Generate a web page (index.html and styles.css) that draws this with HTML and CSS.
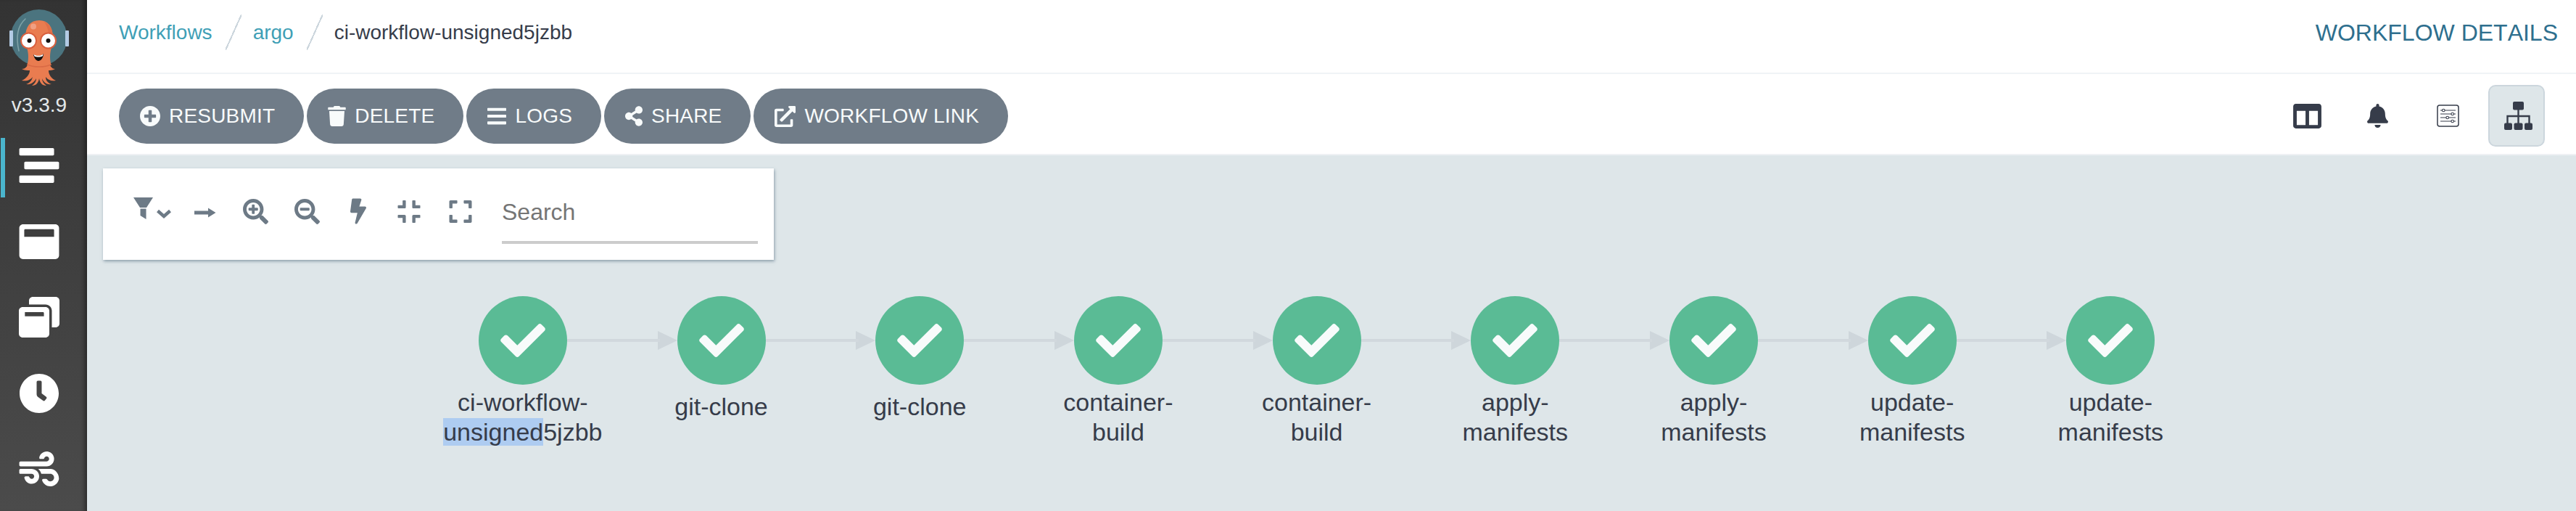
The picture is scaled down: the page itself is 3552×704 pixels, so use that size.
FILE: index.html
```html
<!DOCTYPE html>
<html lang="en">
<head>
<meta charset="utf-8">
<title>ci-workflow-unsigned5jzbb</title>
<link rel="stylesheet" href="styles.css">
</head>
<body>
<div class="app">
  <aside class="sidebar">
    <svg class="logo" viewBox="0 0 120 128" aria-hidden="true">
      <circle cx="53.6" cy="52" r="39" fill="#4b747f"/>
      <path d="M35 26C26 34 21 48 26 70" fill="none" stroke="#7fa3a8" stroke-width="1.6" stroke-linecap="round"/>
      <rect x="13" y="42" width="5" height="22" rx="1" fill="#b3cbe4"/>
      <rect x="90" y="42" width="5" height="22" rx="1" fill="#b3cbe4"/>
      <path d="M30 95C36 95 39 90 39 84H68C68 90 71 95 76 95C72 97 69 97 67 97C67 102 70 108 77 111C70 112 66 110 63 106C63 110 65 114 71 116C64 117 60 113 58 108C58 112 60 115 64 118C58 118 55 114 54 108C53 114 50 118 44 118C48 115 50 112 50 108C47 113 43 117 36 116C42 114 44 110 45 106C42 110 38 112 30 111C37 108 41 102 41 97C38 97 34 97 30 95Z" fill="#e97c50"/>
      <path d="M35 52C35 36 42 28 54 28S73 36 73 52C73 62 69 68 69 78C69 84 70 88 71 90H37C38 88 39 84 39 78C39 68 35 62 35 52Z" fill="#e97c50"/>
      <path d="M60 29C68 33 73 40 73 52L68 58C68 46 66 36 60 29Z" fill="#df6f48"/>
      <path d="M38 89C46 93 62 93 70 89" fill="none" stroke="#d96a45" stroke-width="1.400"/>
      <circle cx="46" cy="36.500" r="4" fill="#f0a083"/>
      <circle cx="39.500" cy="56" r="10.500" fill="#fff" stroke="#d9603e" stroke-width="2"/>
      <circle cx="66.500" cy="56" r="10.500" fill="#fff" stroke="#d9603e" stroke-width="2"/>
      <circle cx="40.500" cy="56" r="3" fill="#111"/>
      <circle cx="66.500" cy="56" r="3" fill="#111"/>
      <path d="M46 75C50 78 56 78 60 74C60 80 56 84 53 84C50 84 47 80 46 75Z" fill="#111"/>
      <path d="M46.500 75C50 77.500 56 77.500 59.500 74.500L59 77C56 79 50 79 47.500 77.500Z" fill="#fff"/>
    </svg>
    <div class="version">v3.3.9</div>
    <nav class="nav">
      <a class="nav-item active"><svg class="nav-icon" viewBox="0 0 512 448"><path d="M16 96h416c8.840 0 16-7.160 16-16V16c0-8.840-7.160-16-16-16H16C7.160 0 0 7.160 0 16v64c0 8.840 7.160 16 16 16zm480 80H80c-8.840 0-16 7.160-16 16v64c0 8.840 7.160 16 16 16h416c8.840 0 16-7.160 16-16v-64c0-8.840-7.160-16-16-16zm-64 176H16c-8.840 0-16 7.160-16 16v64c0 8.840 7.160 16 16 16h416c8.840 0 16-7.160 16-16v-64c0-8.840-7.160-16-16-16z"/></svg></a>
      <a class="nav-item"><svg class="nav-icon" viewBox="0 32 512 448"><path d="M464 32H48C21.500 32 0 53.500 0 80v352c0 26.500 21.500 48 48 48h416c26.500 0 48-21.500 48-48V80c0-26.500-21.500-48-48-48zm-16 160H64v-84c0-6.600 5.400-12 12-12h360c6.600 0 12 5.400 12 12v84z"/></svg></a>
      <a class="nav-item"><svg class="nav-icon" viewBox="0 0 512 512"><path d="M512 48v288c0 26.500-21.500 48-48 48h-48V176c0-44.100-35.900-80-80-80H128V48c0-26.500 21.500-48 48-48h288c26.500 0 48 21.500 48 48zM384 176v288c0 26.500-21.500 48-48 48H48c-26.500 0-48-21.500-48-48V176c0-26.500 21.500-48 48-48h288c26.500 0 48 21.500 48 48zm-68 28c0-6.600-5.400-12-12-12H76v52h240v-40z"/></svg></a>
      <a class="nav-item"><svg class="nav-icon" viewBox="8 8 496 496"><path d="M256,8C119,8,8,119,8,256S119,504,256,504,504,393,504,256,393,8,256,8Zm92.490,313h0l-20,25a16,16,0,0,1-22.490,2.500h0l-67-49.720a40,40,0,0,1-15-31.230V112a16,16,0,0,1,16-16h32a16,16,0,0,1,16,16V256l58,42.500A16,16,0,0,1,348.490,321Z"/></svg></a>
      <a class="nav-item"><svg class="nav-icon" viewBox="0 32 512 448"><path d="M156.700 256H16c-8.800 0-16 7.200-16 16v32c0 8.800 7.200 16 16 16h142.200c15.900 0 30.800 10.900 33.400 26.600 3.300 20-12.100 37.400-31.600 37.400-14.100 0-26.100-9.200-30.400-21.900-2.100-6.300-8.600-10.100-15.200-10.100H81.600c-9.800 0-17.700 8.800-15.900 18.400 8.600 44.100 47.600 77.600 94.200 77.600 57.100 0 102.700-50.100 95.200-108.600C249 291 205.400 256 156.700 256zM16 224h336c59.700 0 106.800-54.800 93.800-116.700-7.600-36.200-36.900-65.500-73.100-73.100-55.400-11.600-105.100 24.900-114.900 75.500-1.900 9.600 6.100 18.300 15.800 18.300h32.800c6.700 0 13.100-3.800 15.200-10.100C325.900 105.200 337.900 96 352 96c19.400 0 34.900 17.400 31.600 37.400-2.600 15.700-17.400 26.600-33.400 26.600H16c-8.800 0-16 7.200-16 16v32c0 8.800 7.200 16 16 16zm384 32H243.700c19.300 16.600 33.200 38.800 39.800 64H400c26.500 0 48 21.500 48 48s-21.500 48-48 48c-17.900 0-33.300-9.900-41.600-24.400-2.900-5-8.700-7.600-14.500-7.600h-33.800c-10.900 0-19 10.800-15.300 21.100 17.800 50.600 70.500 84.800 129.400 72.300 41.200-8.700 75.100-41.600 84.700-82.700C520.100 326.800 465.300 256 400 256z"/></svg></a>
    </nav>
  </aside>
  <main class="main">
    <header class="topbar">
      <div class="crumbs">
        <a class="crumb-link">Workflows</a>
        <span class="crumb-sep"></span>
        <a class="crumb-link">argo</a>
        <span class="crumb-sep"></span>
        <span class="crumb-current">ci-workflow-unsigned5jzbb</span>
      </div>
      <div class="page-title">WORKFLOW DETAILS</div>
    </header>
    <div class="toolbar">
      <div class="actions">
        <button class="btn"><svg class="btn-icon i-plus" viewBox="8 8 496 496"><path d="M256 8C119 8 8 119 8 256s111 248 248 248 248-111 248-248S393 8 256 8zm144 276c0 6.600-5.400 12-12 12h-92v92c0 6.600-5.400 12-12 12h-56c-6.600 0-12-5.400-12-12v-92h-92c-6.600 0-12-5.400-12-12v-56c0-6.600 5.400-12 12-12h92v-92c0-6.600 5.400-12 12-12h56c6.600 0 12 5.400 12 12v92h92c6.600 0 12 5.400 12 12v56z"/></svg>RESUBMIT</button>
        <button class="btn"><svg class="btn-icon i-trash" viewBox="0 0 448 512"><path d="M432 32H312l-9.400-18.700A24 24 0 0 0 281.100 0H166.800a23.720 23.720 0 0 0-21.400 13.300L136 32H16A16 16 0 0 0 0 48v32a16 16 0 0 0 16 16h416a16 16 0 0 0 16-16V48a16 16 0 0 0-16-16zM53.200 467a48 48 0 0 0 47.900 45h245.800a48 48 0 0 0 47.900-45L416 128H32z"/></svg>DELETE</button>
        <button class="btn"><svg class="btn-icon i-bars" viewBox="0 60 448 392"><path d="M16 132h416c8.837 0 16-7.163 16-16V76c0-8.837-7.163-16-16-16H16C7.163 60 0 67.163 0 76v40c0 8.837 7.163 16 16 16zm0 160h416c8.837 0 16-7.163 16-16v-40c0-8.837-7.163-16-16-16H16c-8.837 0-16 7.163-16 16v40c0 8.837 7.163 16 16 16zm0 160h416c8.837 0 16-7.163 16-16v-40c0-8.837-7.163-16-16-16H16c-8.837 0-16 7.163-16 16v40c0 8.837 7.163 16 16 16z"/></svg>LOGS</button>
        <button class="btn"><svg class="btn-icon i-share" viewBox="0 0 448 512"><path d="M352 320c-22.608 0-43.387 7.819-59.790 20.895l-102.486-64.054a96.551 96.551 0 0 0 0-41.683l102.486-64.054C308.613 184.181 329.392 192 352 192c53.019 0 96-42.981 96-96S405.019 0 352 0s-96 42.981-96 96c0 7.158.790 14.130 2.276 20.841L155.790 180.895C139.387 167.819 118.608 160 96 160c-53.019 0-96 42.981-96 96s42.981 96 96 96c22.608 0 43.387-7.819 59.790-20.895l102.486 64.054A96.301 96.301 0 0 0 256 416c0 53.019 42.981 96 96 96s96-42.981 96-96-42.981-96-96-96z"/></svg>SHARE</button>
        <button class="btn"><svg class="btn-icon i-link" viewBox="0 0 512 512"><path d="M432 320h-32a16 16 0 0 0-16 16v112H64V128h144a16 16 0 0 0 16-16V80a16 16 0 0 0-16-16H48a48 48 0 0 0-48 48v352a48 48 0 0 0 48 48h352a48 48 0 0 0 48-48V336a16 16 0 0 0-16-16zM488 0H360c-21.370 0-32.050 25.910-17 41l35.730 35.730L135 320.370a24 24 0 0 0 0 34L157.670 377a24 24 0 0 0 34 0l243.610-243.680L471 169c15 15 41 4.500 41-17V24a24 24 0 0 0-24-24z"/></svg>WORKFLOW LINK</button>
      </div>
      <div class="views">
        <button class="view"><svg class="v-columns" viewBox="0 32 512 448"><path d="M464 32H48C21.490 32 0 53.490 0 80v352c0 26.510 21.490 48 48 48h416c26.510 0 48-21.490 48-48V80c0-26.510-21.490-48-48-48zM224 416H64V160h160v256zm224 0H288V160h160v256z"/></svg></button>
        <button class="view"><svg class="v-bell" viewBox="0 0 448 512"><path d="M224 512c35.320 0 63.970-28.650 63.970-64H160.030c0 35.350 28.650 64 63.970 64zm215.390-149.710c-19.320-20.760-55.470-51.990-55.470-154.290 0-77.700-54.480-139.900-127.940-155.160V32c0-17.670-14.320-32-31.980-32s-31.980 14.330-31.980 32v20.840C118.560 68.100 64.080 130.300 64.080 208c0 102.300-36.150 133.530-55.470 154.290-6 6.450-8.660 14.160-8.610 21.710.110 16.400 12.980 32 32.100 32h383.800c19.120 0 32-15.600 32.100-32 .050-7.550-2.610-15.270-8.610-21.710z"/></svg></button>
        <button class="view"><svg class="v-sliders" viewBox="0 0 31 31"><rect x="1" y="1" width="29" height="29" rx="3" fill="none" stroke="#363c4a" stroke-width="1.500"/><path d="M5 8h21M5 13h21M5 18h21M5 23h21" stroke="#363c4a" stroke-width="1.200"/><g fill="#fff" stroke="#363c4a" stroke-width="1.100"><circle cx="9.300" cy="8" r="1.800"/><circle cx="21.700" cy="13" r="1.800"/><circle cx="14.700" cy="18" r="1.800"/><circle cx="21.700" cy="23" r="1.800"/></g></svg></button>
        <button class="view selected"><svg class="v-sitemap" viewBox="0 0 39 39"><path d="M19.500 11V20M4.500 30V20H34.500V30M19.500 20V30" fill="none" stroke="#363c4a" stroke-width="2.400"/><rect x="12" y="0" width="15" height="11.500" rx="2"/><rect x="0" y="29.500" width="11" height="9.500" rx="2"/><rect x="13.500" y="29.500" width="12" height="9.500" rx="2"/><rect x="28" y="29.500" width="11" height="9.500" rx="2"/></svg></button>
      </div>
    </div>
    <section class="canvas">
      <div class="filters">
        <div class="tool tool-filter">
          <svg class="t-funnel" viewBox="0 0 27 30"><path d="M0 0H27L18 14H9ZM9.500 15.500H17.500V30L9.500 25Z"/></svg>
          <svg class="t-chevron" viewBox="0 0 22 13"><path d="M2.500 2.500L11 10 19.500 2.500" fill="none" stroke="#6d7a86" stroke-width="4.500"/></svg>
        </div>
        <div class="tool"><svg class="t-arrow" viewBox="0 0 31 14"><path d="M1 4.500H20V0.500L30.500 7 20 13.500V9.500H1Z"/></svg></div>
        <div class="tool"><svg class="t-zoom" viewBox="0 0 512 512"><path d="M304 192v32c0 6.600-5.400 12-12 12h-56v56c0 6.600-5.400 12-12 12h-32c-6.600 0-12-5.400-12-12v-56h-56c-6.600 0-12-5.400-12-12v-32c0-6.600 5.400-12 12-12h56v-56c0-6.600 5.400-12 12-12h32c6.600 0 12 5.400 12 12v56h56c6.600 0 12 5.400 12 12zm201 284.700L476.700 505c-9.400 9.400-24.600 9.400-33.900 0L343 405.300c-4.500-4.500-7-10.600-7-17V372c-35.300 27.600-79.700 44-128 44C93.100 416 0 322.900 0 208S93.100 0 208 0s208 93.100 208 208c0 48.300-16.400 92.700-44 128h16.300c6.400 0 12.500 2.500 17 7l99.700 99.700c9.300 9.400 9.300 24.600 0 34zM344 208c0-75.200-60.800-136-136-136S72 132.800 72 208s60.800 136 136 136 136-60.800 136-136z"/></svg></div>
        <div class="tool"><svg class="t-zoom" viewBox="0 0 512 512"><path d="M304 192v32c0 6.600-5.400 12-12 12H124c-6.600 0-12-5.400-12-12v-32c0-6.600 5.400-12 12-12h168c6.600 0 12 5.400 12 12zm201 284.700L476.700 505c-9.400 9.400-24.600 9.400-33.900 0L343 405.300c-4.500-4.500-7-10.600-7-17V372c-35.300 27.600-79.700 44-128 44C93.100 416 0 322.900 0 208S93.100 0 208 0s208 93.100 208 208c0 48.300-16.400 92.700-44 128h16.300c6.400 0 12.500 2.500 17 7l99.700 99.700c9.300 9.400 9.300 24.600 0 34zM344 208c0-75.200-60.800-136-136-136S72 132.800 72 208s60.800 136 136 136 136-60.800 136-136z"/></svg></div>
        <div class="tool"><svg class="t-bolt" viewBox="0 0 320 512"><path d="M296 160H180.600l42.600-129.800C227.200 15 215.700 0 200 0H56C44 0 33.800 8.900 32.200 20.800l-32 240C-1.700 275.200 9.500 288 24 288h118.700L96.600 482.500c-3.600 15.200 8 29.500 23.300 29.500 8.400 0 16.400-4.400 20.800-12l176-304c9.300-15.900-2.200-36-20.700-36z"/></svg></div>
        <div class="tool"><svg class="t-frame" viewBox="0 32 448 448"><path d="M436 192H312c-13.300 0-24-10.700-24-24V44c0-6.600 5.400-12 12-12h40c6.600 0 12 5.400 12 12v84h84c6.600 0 12 5.400 12 12v40c0 6.600-5.400 12-12 12zm-276-24V44c0-6.600-5.400-12-12-12h-40c-6.600 0-12 5.400-12 12v84H12c-6.600 0-12 5.400-12 12v40c0 6.600 5.400 12 12 12h124c13.300 0 24-10.700 24-24zm0 300V344c0-13.300-10.700-24-24-24H12c-6.600 0-12 5.400-12 12v40c0 6.600 5.400 12 12 12h84v84c0 6.600 5.400 12 12 12h40c6.600 0 12-5.400 12-12zm192 0v-84h84c6.600 0 12-5.400 12-12v-40c0-6.600-5.400-12-12-12H312c-13.300 0-24 10.700-24 24v124c0 6.600 5.400 12 12 12h40c6.600 0 12-5.400 12-12z"/></svg></div>
        <div class="tool"><svg class="t-frame" viewBox="0 32 448 448"><path d="M0 180V56c0-13.300 10.700-24 24-24h124c6.600 0 12 5.400 12 12v40c0 6.600-5.400 12-12 12H64v84c0 6.600-5.400 12-12 12H12c-6.600 0-12-5.400-12-12zm288-136v40c0 6.600 5.400 12 12 12h84v84c0 6.600 5.400 12 12 12h40c6.600 0 12-5.400 12-12V56c0-13.300-10.700-24-24-24H300c-6.600 0-12 5.400-12 12zm148 276h-40c-6.600 0-12 5.400-12 12v84h-84c-6.600 0-12 5.400-12 12v40c0 6.600 5.400 12 12 12h124c13.300 0 24-10.700 24-24V332c0-6.600-5.400-12-12-12zM160 468v-40c0-6.600-5.400-12-12-12H64v-84c0-6.600-5.400-12-12-12H12c-6.600 0-12 5.400-12 12v124c0 13.300 10.700 24 24 24h124c6.600 0 12-5.400 12-12z"/></svg></div>
        <input class="search" type="text" placeholder="Search">
      </div>
      <div class="graph">
        <div class="node linked"><div class="circle"><svg class="check" viewBox="0 65 512 382"><path d="M173.898 439.404l-166.400-166.400c-9.997-9.997-9.997-26.206 0-36.204l36.203-36.204c9.997-9.998 26.207-9.998 36.204 0L192 312.690 432.095 72.596c9.997-9.997 26.207-9.997 36.204 0l36.203 36.204c9.997 9.997 9.997 26.206 0 36.204l-294.400 294.401c-9.998 9.997-26.207 9.997-36.204-.001z"/></svg></div><div class="label">ci-workflow-<br><span class="hl">unsigned</span>5jzbb</div></div>
        <div class="node linked"><div class="circle"><svg class="check" viewBox="0 65 512 382"><path d="M173.898 439.404l-166.400-166.400c-9.997-9.997-9.997-26.206 0-36.204l36.203-36.204c9.997-9.998 26.207-9.998 36.204 0L192 312.690 432.095 72.596c9.997-9.997 26.207-9.997 36.204 0l36.203 36.204c9.997 9.997 9.997 26.206 0 36.204l-294.400 294.401c-9.998 9.997-26.207 9.997-36.204-.001z"/></svg></div><div class="label single">git-clone</div></div>
        <div class="node linked"><div class="circle"><svg class="check" viewBox="0 65 512 382"><path d="M173.898 439.404l-166.400-166.400c-9.997-9.997-9.997-26.206 0-36.204l36.203-36.204c9.997-9.998 26.207-9.998 36.204 0L192 312.690 432.095 72.596c9.997-9.997 26.207-9.997 36.204 0l36.203 36.204c9.997 9.997 9.997 26.206 0 36.204l-294.400 294.401c-9.998 9.997-26.207 9.997-36.204-.001z"/></svg></div><div class="label single">git-clone</div></div>
        <div class="node linked"><div class="circle"><svg class="check" viewBox="0 65 512 382"><path d="M173.898 439.404l-166.400-166.400c-9.997-9.997-9.997-26.206 0-36.204l36.203-36.204c9.997-9.998 26.207-9.998 36.204 0L192 312.690 432.095 72.596c9.997-9.997 26.207-9.997 36.204 0l36.203 36.204c9.997 9.997 9.997 26.206 0 36.204l-294.400 294.401c-9.998 9.997-26.207 9.997-36.204-.001z"/></svg></div><div class="label">container-<br>build</div></div>
        <div class="node linked"><div class="circle"><svg class="check" viewBox="0 65 512 382"><path d="M173.898 439.404l-166.400-166.400c-9.997-9.997-9.997-26.206 0-36.204l36.203-36.204c9.997-9.998 26.207-9.998 36.204 0L192 312.690 432.095 72.596c9.997-9.997 26.207-9.997 36.204 0l36.203 36.204c9.997 9.997 9.997 26.206 0 36.204l-294.400 294.401c-9.998 9.997-26.207 9.997-36.204-.001z"/></svg></div><div class="label">container-<br>build</div></div>
        <div class="node linked"><div class="circle"><svg class="check" viewBox="0 65 512 382"><path d="M173.898 439.404l-166.400-166.400c-9.997-9.997-9.997-26.206 0-36.204l36.203-36.204c9.997-9.998 26.207-9.998 36.204 0L192 312.690 432.095 72.596c9.997-9.997 26.207-9.997 36.204 0l36.203 36.204c9.997 9.997 9.997 26.206 0 36.204l-294.400 294.401c-9.998 9.997-26.207 9.997-36.204-.001z"/></svg></div><div class="label">apply-<br>manifests</div></div>
        <div class="node linked"><div class="circle"><svg class="check" viewBox="0 65 512 382"><path d="M173.898 439.404l-166.400-166.400c-9.997-9.997-9.997-26.206 0-36.204l36.203-36.204c9.997-9.998 26.207-9.998 36.204 0L192 312.690 432.095 72.596c9.997-9.997 26.207-9.997 36.204 0l36.203 36.204c9.997 9.997 9.997 26.206 0 36.204l-294.400 294.401c-9.998 9.997-26.207 9.997-36.204-.001z"/></svg></div><div class="label">apply-<br>manifests</div></div>
        <div class="node linked"><div class="circle"><svg class="check" viewBox="0 65 512 382"><path d="M173.898 439.404l-166.400-166.400c-9.997-9.997-9.997-26.206 0-36.204l36.203-36.204c9.997-9.998 26.207-9.998 36.204 0L192 312.690 432.095 72.596c9.997-9.997 26.207-9.997 36.204 0l36.203 36.204c9.997 9.997 9.997 26.206 0 36.204l-294.400 294.401c-9.998 9.997-26.207 9.997-36.204-.001z"/></svg></div><div class="label">update-<br>manifests</div></div>
        <div class="node"><div class="circle"><svg class="check" viewBox="0 65 512 382"><path d="M173.898 439.404l-166.400-166.400c-9.997-9.997-9.997-26.206 0-36.204l36.203-36.204c9.997-9.998 26.207-9.998 36.204 0L192 312.690 432.095 72.596c9.997-9.997 26.207-9.997 36.204 0l36.203 36.204c9.997 9.997 9.997 26.206 0 36.204l-294.400 294.401c-9.998 9.997-26.207 9.997-36.204-.001z"/></svg></div><div class="label">update-<br>manifests</div></div>
      </div>
    </section>
  </main>
</div>
</body>
</html>
```
FILE: styles.css
```css
* { box-sizing: border-box; }
html, body { margin: 0; height: 100%; overflow: hidden; }
body { font-family: "Liberation Sans", Arial, sans-serif; color: #363c4a; background: #fff; }
.app { display: flex; height: 704px; }

.sidebar {
  width: 120px; flex: none; position: relative;
  background: linear-gradient(#333333, #4b4b4b);
  box-shadow: inset -7px 0 6px -4px rgba(0, 0, 0, .45);
}
.logo { display: block; width: 120px; height: 128px; }
.version { height: 34px; width: 108px; text-align: center; font-size: 28px; line-height: 34px; color: #e4e8ea; }
.nav { margin-top: 14px; display: flex; flex-direction: column; }
.nav-item { height: 104.5px; width: 108px; display: flex; align-items: center; justify-content: center; position: relative; }
.nav-item.active::before { content: ""; position: absolute; left: 1px; top: 14px; width: 6px; height: 82px; background: #4ab5cd; }
.nav-icon { width: 56px; height: 48px; fill: #fff; }
.nav-item:nth-child(3) .nav-icon { height: 56px; }
.nav-item:nth-child(4) .nav-icon { height: 54px; }

.main { flex: 1; min-width: 0; display: flex; flex-direction: column; }

.topbar {
  height: 102px; flex: none; display: flex; justify-content: space-between; align-items: center;
  padding: 0 25px 10px 44px; border-bottom: 2px solid #f0f3f6;
}
.crumbs { display: flex; align-items: center; font-size: 28px; }
.crumb-link { color: #3f9fb6; }
.crumb-sep { width: 22px; height: 49px; margin: -2px 16px 0 18px; background: linear-gradient(to top left, transparent calc(50% - 1px), #ccd6dd calc(50% - 1px), #ccd6dd calc(50% + 1px), transparent calc(50% + 1px)); }
.crumb-current { color: #363c4a; }
.page-title { font-size: 32px; color: #2e6f8e; font-kerning: none; }

.toolbar {
  height: 112px; flex: none; display: flex; justify-content: space-between; align-items: flex-start;
  padding: 20px 43px 0 44px; border-bottom: 2px solid #eef1f4;
}
.actions { display: flex; gap: 4px; }
.btn {
  height: 76px; border: 0; border-radius: 38px; padding: 0 40px 0 29px;
  background: #707c88; color: #f8fbfb; font: 28px "Liberation Sans", Arial, sans-serif;
  font-kerning: none; letter-spacing: .2px;
  display: flex; align-items: center; gap: 12px; white-space: nowrap;
}
.btn-icon { fill: #f8fbfb; height: 28px; }
.i-plus { width: 28px; }
.i-trash { width: 25px; }
.i-bars { width: 26px; }
.i-share { width: 24px; }
.i-link { width: 29px; height: 29px; }

.views { display: flex; gap: 19px; margin-top: -5px; }
.view {
  width: 78px; height: 85px; border: 2px solid transparent; border-radius: 10px; background: none; padding: 0 0 0 4px;
  display: flex; align-items: center; justify-content: center;
}
.view svg { fill: #363c4a; }
.view.selected { background: #dee6e9; border-color: #ccd6dd; }
.v-columns { width: 39px; height: 34px; }
.v-bell { width: 29px; height: 33px; }
.v-sliders { width: 31px; height: 31px; }
.v-sitemap { width: 39px; height: 39px; }

.canvas { flex: 1; min-height: 0; background: #dee6e9; padding: 18px 0 0 22px; }
.filters {
  width: 925px; height: 126px; background: #fff; box-shadow: 1px 2px 4px rgba(112, 135, 150, .75);
  display: flex; align-items: flex-start; padding: 0 22px 0 31px;
}
.tool { width: 70.5px; height: 118px; flex: none; display: flex; align-items: center; justify-content: center; }
.tool svg { fill: #6d7a86; }
.tool-filter { width: 74px; gap: 4px; justify-content: center; }
.t-funnel { width: 27px; height: 30px; margin-top: -8px; }
.t-chevron { width: 22px; height: 13px; margin-top: 6px; }
.t-arrow { width: 31px; height: 14px; margin-top: 4px; }
.t-zoom { width: 35px; height: 35px; }
.t-bolt { width: 22px; height: 36px; }
.t-frame { width: 32px; height: 31px; }
.search {
  width: 353px; height: 84px; margin: 20px 0 0 22px; flex: none; padding: 0; border: 0; border-bottom: 4px solid #ccc;
  background: none; outline: 0; font: 32px "Liberation Sans", Arial, sans-serif; color: #363c4a;
}
.search::placeholder { color: #757575; opacity: 1; }

.graph { display: flex; margin: 50px 0 0 442px; }
.node { width: 273.700px; flex: none; position: relative; display: flex; flex-direction: column; align-items: center; }
.circle { width: 122px; height: 122px; border-radius: 50%; background: #5abb95; display: flex; align-items: center; justify-content: center; flex: none; }
.check { width: 62px; height: 46px; fill: #f8fbfb; }
.linked::after {
  content: ""; position: absolute; left: calc(50% + 61px); top: 59px; width: 128px; height: 4px; background: #d1d8dd;
}
.linked::before {
  content: ""; position: absolute; left: calc(50% + 185.700px); top: 48px;
  border-style: solid; border-width: 13px 0 13px 27px; border-color: transparent transparent transparent #ced6db;
}
.label { font-size: 34px; line-height: 41px; text-align: center; margin-top: 4px; white-space: nowrap; color: #363c4a; }
.label.single { margin-top: 10px; }
.hl { background: #aeccf1; }
```
